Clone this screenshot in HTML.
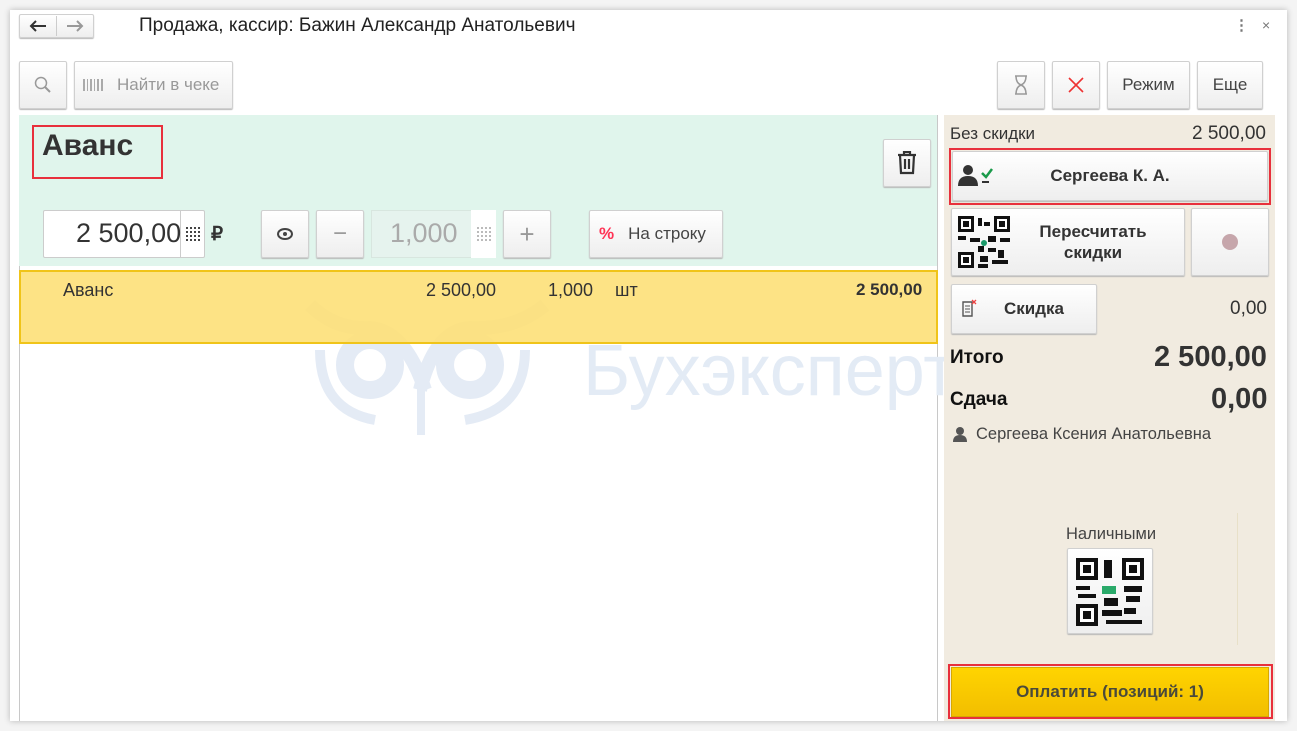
<!DOCTYPE html>
<html><head><meta charset="utf-8"><style>
*{box-sizing:border-box;margin:0;padding:0}
body{width:1297px;height:731px;background:#f4f4f4;font-family:"Liberation Sans",Arial,sans-serif;position:relative;overflow:hidden;color:#333}
.a{position:absolute}
.win{left:10px;top:10px;width:1277px;height:711px;background:#fff;box-shadow:0 0 6px rgba(0,0,0,.25)}
.btn{position:absolute;background:linear-gradient(#fff,#eee);border:1px solid #d0d0d0;border-radius:2px;box-shadow:0 1px 1px #b8b8b8;display:flex;align-items:center;justify-content:center;font-size:16px;color:#444}
.red{position:absolute;border:2px solid #e8303c}
</style></head><body>
<div class="a win"></div>
<!-- nav -->
<div class="btn" style="left:19px;top:14px;width:75px;height:24px"></div>
<div class="a" style="left:56px;top:16px;width:1px;height:20px;background:#ccc"></div>
<svg class="a" style="left:28px;top:19px" width="20" height="14"><path d="M18 7H3M8 2L3 7L8 12" stroke="#333" stroke-width="2" fill="none"/></svg>
<svg class="a" style="left:65px;top:19px" width="20" height="14"><path d="M2 7H17M12 2L17 7L12 12" stroke="#999" stroke-width="2" fill="none"/></svg>
<div class="a" style="left:139px;top:15px;font-size:19px;color:#222">Продажа, кассир: Бажин Александр Анатольевич</div>
<div class="a" style="left:1234px;top:16px;font-size:15px;color:#777;font-weight:bold">⋮</div>
<div class="a" style="left:1262px;top:17px;font-size:14px;color:#777">×</div>
<!-- toolbar -->
<div class="btn" style="left:19px;top:61px;width:48px;height:48px"><svg width="18" height="18"><circle cx="7" cy="7" r="5.5" fill="none" stroke="#999" stroke-width="1.5"/><line x1="11" y1="11" x2="16" y2="16" stroke="#999" stroke-width="2"/></svg></div>
<div class="btn" style="left:74px;top:61px;width:159px;height:48px;justify-content:flex-start;padding-left:8px;color:#999;font-size:17px"><svg width="22" height="14" style="margin-right:12px"><g fill="#aaa"><rect x="0" y="1" width="2" height="12"/><rect x="4" y="1" width="1" height="12"/><rect x="7" y="1" width="2" height="12"/><rect x="11" y="1" width="1" height="12"/><rect x="14" y="1" width="2" height="12"/><rect x="18" y="1" width="2" height="12"/></g></svg>Найти в чеке</div>
<div class="btn" style="left:997px;top:61px;width:48px;height:48px"><svg width="14" height="20"><path d="M1 1H13M1 19H13M2 1Q2 8 7 10Q12 12 12 19M12 1Q12 8 7 10Q2 12 2 19" stroke="#999" stroke-width="1.5" fill="none"/></svg></div>
<div class="btn" style="left:1052px;top:61px;width:48px;height:48px"><svg width="16" height="16"><path d="M1 1L15 15M15 1L1 15" stroke="#e33" stroke-width="1.6"/></svg></div>
<div class="btn" style="left:1107px;top:61px;width:83px;height:48px;font-size:17px">Режим</div>
<div class="btn" style="left:1197px;top:61px;width:66px;height:48px;font-size:17px">Еще</div>
<!-- green area -->
<div class="a" style="left:19px;top:115px;width:919px;height:151px;background:#e0f5ec"></div>
<div class="a" style="left:42px;top:129px;font-size:30px;font-weight:bold;color:#333">Аванс</div>
<div class="red" style="left:32px;top:125px;width:131px;height:54px"></div>
<div class="btn" style="left:883px;top:139px;width:48px;height:48px"><svg width="22" height="24"><path d="M2 4H20M8 4V1H14V4M4 4L5 22H17L18 4M9 8V18M13 8V18" fill="none" stroke="#333" stroke-width="2.2"/></svg></div>
<div class="a" style="left:43px;top:210px;width:162px;height:48px;background:#fff;border:1px solid #ccc;border-radius:2px"></div>
<div class="a" style="left:180px;top:210px;width:1px;height:48px;background:#ccc"></div>
<div class="a" style="left:76px;top:218px;font-size:27px;color:#333">2 500,00</div>
<svg class="a" style="left:186px;top:227px" width="14" height="14"><g fill="#444"><rect x="0" y="0" width="2" height="2"/><rect x="4" y="0" width="2" height="2"/><rect x="8" y="0" width="2" height="2"/><rect x="12" y="0" width="2" height="2"/><rect x="0" y="4" width="2" height="2"/><rect x="4" y="4" width="2" height="2"/><rect x="8" y="4" width="2" height="2"/><rect x="12" y="4" width="2" height="2"/><rect x="0" y="8" width="2" height="2"/><rect x="4" y="8" width="2" height="2"/><rect x="8" y="8" width="2" height="2"/><rect x="12" y="8" width="2" height="2"/><rect x="0" y="12" width="2" height="2"/><rect x="4" y="12" width="2" height="2"/><rect x="8" y="12" width="2" height="2"/><rect x="12" y="12" width="2" height="2"/></g></svg>
<div class="a" style="left:211px;top:223px;font-size:19px;font-weight:bold;color:#333">₽</div>
<div class="btn" style="left:261px;top:210px;width:48px;height:48px"><svg width="16" height="12"><ellipse cx="8" cy="6" rx="7" ry="5" fill="none" stroke="#444" stroke-width="2"/><circle cx="8" cy="6" r="2" fill="#444"/></svg></div>
<div class="btn" style="left:316px;top:210px;width:48px;height:48px;font-size:24px;color:#999">−</div>
<div class="a" style="left:371px;top:210px;width:125px;height:48px;background:#e6f3ee;border:1px solid #d8e6df"></div>
<div class="a" style="left:471px;top:210px;width:25px;height:48px;background:#fff"></div>
<div class="a" style="left:390px;top:218px;font-size:27px;color:#aaa">1,000</div>
<svg class="a" style="left:477px;top:227px" width="14" height="14"><g fill="#bbb"><rect x="0" y="0" width="2" height="2"/><rect x="4" y="0" width="2" height="2"/><rect x="8" y="0" width="2" height="2"/><rect x="12" y="0" width="2" height="2"/><rect x="0" y="4" width="2" height="2"/><rect x="4" y="4" width="2" height="2"/><rect x="8" y="4" width="2" height="2"/><rect x="12" y="4" width="2" height="2"/><rect x="0" y="8" width="2" height="2"/><rect x="4" y="8" width="2" height="2"/><rect x="8" y="8" width="2" height="2"/><rect x="12" y="8" width="2" height="2"/><rect x="0" y="12" width="2" height="2"/><rect x="4" y="12" width="2" height="2"/><rect x="8" y="12" width="2" height="2"/><rect x="12" y="12" width="2" height="2"/></g></svg>
<div class="btn" style="left:503px;top:210px;width:48px;height:48px;font-size:26px;color:#999">+</div>
<div class="btn" style="left:589px;top:210px;width:134px;height:48px;justify-content:flex-start;padding-left:9px;font-size:17px"><span style="color:#f35;font-weight:bold;margin-right:14px">%</span>На строку</div>
<!-- list -->
<div class="a" style="left:19px;top:266px;width:1px;height:455px;background:#c8c8c8"></div>
<div class="a" style="left:937px;top:115px;width:1px;height:606px;background:#c8c8c8"></div>
<!-- watermark -->
<div class="a" style="left:583px;top:330px;font-size:72px;color:#e3ebf5">Бухэксперт</div>
<svg class="a" style="left:295px;top:290px" width="270" height="150"><g fill="none" stroke="#e4ebf5" stroke-width="18"><circle cx="75" cy="75" r="25"/><circle cx="175" cy="75" r="25"/></g><path d="M15 15Q40 40 75 38Q110 40 130 100M250 15Q220 40 175 38Q140 40 125 100" stroke="#e4ebf5" stroke-width="14" fill="none"/><path d="M25 60Q25 120 80 130M230 60Q230 120 170 130" stroke="#e4ebf5" stroke-width="10" fill="none"/><rect x="122" y="80" width="8" height="65" fill="#e4ebf5"/></svg>
<div class="a" style="left:19px;top:270px;width:919px;height:74px;background:rgba(253,224,120,.9);border:2px solid #f0c419"></div>
<div class="a" style="left:63px;top:280px;font-size:18px;color:#333">Аванс</div>
<div class="a" style="left:426px;top:280px;font-size:18px;color:#333">2 500,00</div>
<div class="a" style="left:548px;top:280px;font-size:18px;color:#333">1,000</div>
<div class="a" style="left:615px;top:280px;font-size:18px;color:#333">шт</div>
<div class="a" style="left:856px;top:280px;font-size:17px;font-weight:bold;color:#333">2 500,00</div>
<!-- right panel -->
<div class="a" style="left:944px;top:115px;width:331px;height:606px;background:#f1ebe0"></div>
<div class="a" style="left:950px;top:124px;font-size:17px;color:#333">Без скидки</div>
<div class="a" style="left:1192px;top:123px;font-size:19px;color:#333">2 500,00</div>
<div class="btn" style="left:952px;top:151px;width:316px;height:50px;font-weight:bold;color:#333;font-size:17px">Сергеева К. А.</div>
<svg class="a" style="left:957px;top:164px" width="38" height="24"><circle cx="11" cy="6" r="5" fill="#333"/><path d="M1 22Q1 12 11 12Q21 12 21 22Z" fill="#333"/><path d="M25 9L29 13L35 5" stroke="#1a9a4a" stroke-width="2.5" fill="none"/><rect x="25" y="17" width="7" height="2" fill="#333"/></svg>
<div class="red" style="left:949px;top:148px;width:322px;height:57px"></div>
<div class="btn" style="left:951px;top:208px;width:234px;height:68px;font-weight:bold;color:#333;padding-left:50px;text-align:center;line-height:21px;font-size:17px">Пересчитать<br>скидки</div>
<svg class="a" style="left:958px;top:216px" width="52" height="52"><g fill="#111"><rect x="0" y="0" width="16" height="16"/><rect x="36" y="0" width="16" height="16"/><rect x="0" y="36" width="16" height="16"/></g><g fill="#fff"><rect x="3" y="3" width="10" height="10"/><rect x="39" y="3" width="10" height="10"/><rect x="3" y="39" width="10" height="10"/></g><g fill="#111"><rect x="5" y="5" width="6" height="6"/><rect x="41" y="5" width="6" height="6"/><rect x="5" y="41" width="6" height="6"/><rect x="20" y="2" width="4" height="8"/><rect x="26" y="6" width="6" height="4"/><rect x="0" y="20" width="8" height="4"/><rect x="12" y="22" width="10" height="4"/><rect x="30" y="20" width="8" height="6"/><rect x="42" y="22" width="10" height="4"/><rect x="20" y="30" width="6" height="6"/><rect x="30" y="32" width="8" height="4"/><rect x="40" y="34" width="6" height="8"/><rect x="22" y="40" width="8" height="6"/><rect x="34" y="44" width="16" height="4"/><rect x="20" y="48" width="10" height="4"/></g><circle cx="26" cy="27" r="3" fill="#1a9a6a"/></svg>
<div class="btn" style="left:1191px;top:208px;width:78px;height:68px"><span style="width:16px;height:16px;border-radius:50%;background:#c6a6ab;display:inline-block"></span></div>
<div class="btn" style="left:951px;top:284px;width:146px;height:50px;font-weight:bold;color:#333;padding-left:20px;font-size:17px">Скидка</div>
<svg class="a" style="left:961px;top:299px" width="16" height="18"><path d="M2 3H11V17H2Z" fill="none" stroke="#555" stroke-width="1.4"/><path d="M4 7H9M4 10H9M4 13H9" stroke="#555"/><path d="M11 1L15 5M15 1L11 5" stroke="#e44" stroke-width="1.3"/></svg>
<div class="a" style="left:1230px;top:298px;font-size:19px;color:#333">0,00</div>
<div class="a" style="left:950px;top:347px;font-size:19px;font-weight:bold;color:#111">Итого</div>
<div class="a" style="left:1154px;top:341px;font-size:29px;font-weight:bold;color:#333">2 500,00</div>
<div class="a" style="left:950px;top:389px;font-size:19px;font-weight:bold;color:#111">Сдача</div>
<div class="a" style="left:1211px;top:383px;font-size:29px;font-weight:bold;color:#333">0,00</div>
<svg class="a" style="left:952px;top:426px" width="16" height="16"><circle cx="8" cy="5" r="4" fill="#555"/><path d="M1 16Q1 9 8 9Q15 9 15 16Z" fill="#555"/></svg>
<div class="a" style="left:976px;top:425px;font-size:16.5px;color:#444">Сергеева Ксения Анатольевна</div>
<div class="a" style="left:1237px;top:513px;width:1px;height:132px;background:#e8e0c8"></div>
<div class="a" style="left:1066px;top:525px;font-size:16.5px;color:#444">Наличными</div>
<div class="btn" style="left:1067px;top:548px;width:86px;height:86px"></div>
<svg class="a" style="left:1076px;top:558px" width="68" height="68"><g fill="#111"><rect x="0" y="0" width="22" height="22"/><rect x="46" y="0" width="22" height="22"/><rect x="0" y="46" width="22" height="22"/></g><g fill="#fff"><rect x="4" y="4" width="14" height="14"/><rect x="50" y="4" width="14" height="14"/><rect x="4" y="50" width="14" height="14"/></g><g fill="#111"><rect x="7" y="7" width="8" height="8"/><rect x="53" y="7" width="8" height="8"/><rect x="7" y="53" width="8" height="8"/><rect x="28" y="2" width="8" height="18"/><rect x="0" y="28" width="14" height="4"/><rect x="2" y="36" width="18" height="4"/><rect x="48" y="28" width="18" height="6"/><rect x="50" y="38" width="14" height="6"/><rect x="28" y="40" width="14" height="8"/><rect x="26" y="52" width="20" height="6"/><rect x="48" y="50" width="12" height="6"/><rect x="30" y="62" width="36" height="4"/></g><rect x="26" y="28" width="14" height="8" fill="#2aaa6a"/></svg>
<div class="a" style="left:951px;top:667px;width:318px;height:50px;background:linear-gradient(#ffd400,#f2be00);border:1px solid #d7a800;display:flex;align-items:center;justify-content:center;font-size:17px;font-weight:bold;color:#4a4a3a">Оплатить (позиций: 1)</div>
<div class="red" style="left:948px;top:664px;width:325px;height:55px"></div>
</body></html>
